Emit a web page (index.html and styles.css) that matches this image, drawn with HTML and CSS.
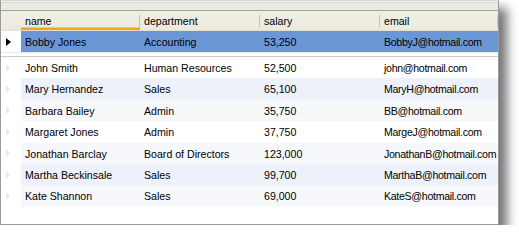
FILE: index.html
```html
<!DOCTYPE html>
<html>
<head>
<meta charset="utf-8">
<link rel="stylesheet" href="styles.css">
</head>
<body>
<div class="grid">
  <div class="topbar"></div>
  <div class="row header">
    <div class="rh"></div>
    <div class="hc active">name</div>
    <div class="hc">department</div>
    <div class="hc">salary</div>
    <div class="hc">email</div>
  </div>
  <div class="row sel">
    <div class="rh"><span class="tri dark"></span></div>
    <div class="c">Bobby Jones</div>
    <div class="c">Accounting</div>
    <div class="c">53,250</div>
    <div class="c mail">BobbyJ@hotmail.com</div>
  </div>
  <div class="split"></div>
  <div class="row">
    <div class="rh"><span class="tri"></span></div>
    <div class="c">John Smith</div>
    <div class="c">Human Resources</div>
    <div class="c">52,500</div>
    <div class="c mail">john@hotmail.com</div>
  </div>
  <div class="row blue">
    <div class="rh"><span class="tri"></span></div>
    <div class="c">Mary Hernandez</div>
    <div class="c">Sales</div>
    <div class="c">65,100</div>
    <div class="c mail">MaryH@hotmail.com</div>
  </div>
  <div class="row faint">
    <div class="rh"><span class="tri"></span></div>
    <div class="c">Barbara Bailey</div>
    <div class="c">Admin</div>
    <div class="c">35,750</div>
    <div class="c mail">BB@hotmail.com</div>
  </div>
  <div class="row">
    <div class="rh"><span class="tri"></span></div>
    <div class="c">Margaret Jones</div>
    <div class="c">Admin</div>
    <div class="c">37,750</div>
    <div class="c mail">MargeJ@hotmail.com</div>
  </div>
  <div class="row faint">
    <div class="rh"><span class="tri"></span></div>
    <div class="c">Jonathan Barclay</div>
    <div class="c">Board of Directors</div>
    <div class="c">123,000</div>
    <div class="c mail">JonathanB@hotmail.com</div>
  </div>
  <div class="row blue">
    <div class="rh"><span class="tri"></span></div>
    <div class="c">Martha Beckinsale</div>
    <div class="c">Sales</div>
    <div class="c">99,700</div>
    <div class="c mail">MarthaB@hotmail.com</div>
  </div>
  <div class="row faint">
    <div class="rh"><span class="tri"></span></div>
    <div class="c">Kate Shannon</div>
    <div class="c">Sales</div>
    <div class="c">69,000</div>
    <div class="c mail">KateS@hotmail.com</div>
  </div>
</div>
</body>
</html>
```
FILE: styles.css
```css
html, body {
  margin: 0;
  padding: 0;
  background: #ffffff;
}
.grid {
  width: 497px;
  height: 223px;
  border: 1px solid #9a9a9a;
  border-top-color: #d6d6d6;
  background: #ffffff;
  box-shadow: 8px 8px 10px rgba(0, 0, 0, 0.55);
  font-family: "Liberation Sans", Arial, sans-serif;
  font-size: 10.6px;
  color: #000;
  overflow: hidden;
}
.topbar {
  height: 9px;
  background: linear-gradient(#f3f3f1 0, #f3f3f1 1px, #dddbd2 1px, #dddbd2 2px, #ecebe2 2px);
  border-bottom: 1px solid #a6a498;
}
.row {
  display: grid;
  grid-template-columns: 20px 119px 120px 120px 118px;
  height: 21.4px;
  line-height: 21.4px;
}
.row .c {
  padding-left: 4px;
  padding-top: 2px;
  box-sizing: border-box;
  line-height: 19.4px;
  white-space: nowrap;
  overflow: hidden;
}
.row .c.mail {
  letter-spacing: -0.3px;
}
.rh {
  display: flex;
  align-items: center;
  padding-left: 5px;
  background: #ffffff;
}
.tri {
  width: 0;
  height: 0;
  border-left: 4px solid #e8e8e8;
  border-top: 4px solid transparent;
  border-bottom: 4px solid transparent;
}
.tri.dark {
  border-left: 5px solid #000;
}
.header {
  height: 19px;
  line-height: 19px;
  background: linear-gradient(#f0efe6, #ebeadb);
  border-bottom: 1px solid #e2e0d3;
}
.header .rh {
  background: linear-gradient(#f0efe6, #ebeadb);
}
.hc {
  padding-left: 4px;
  padding-top: 1px;
  line-height: 18px;
  background: linear-gradient(#c7c5b2, #c7c5b2) right center / 1px 12px no-repeat;
}
.hc.active {
  box-shadow: inset 0 -2px #f2a41c, inset 0 -3px #f9c866;
}
.sel {
  height: 21px;
}
.sel .c {
  padding-top: 1px;
  line-height: 20px;
  background: #6a96d6;
}
.split {
  height: 3px;
  border-top: 1px solid #ececec;
  border-bottom: 1px solid #cfcdc6;
  background: #ffffff;
}
.blue .c {
  background: #edf2fa;
}
.faint .c {
  background: #f6f8fc;
}
```
